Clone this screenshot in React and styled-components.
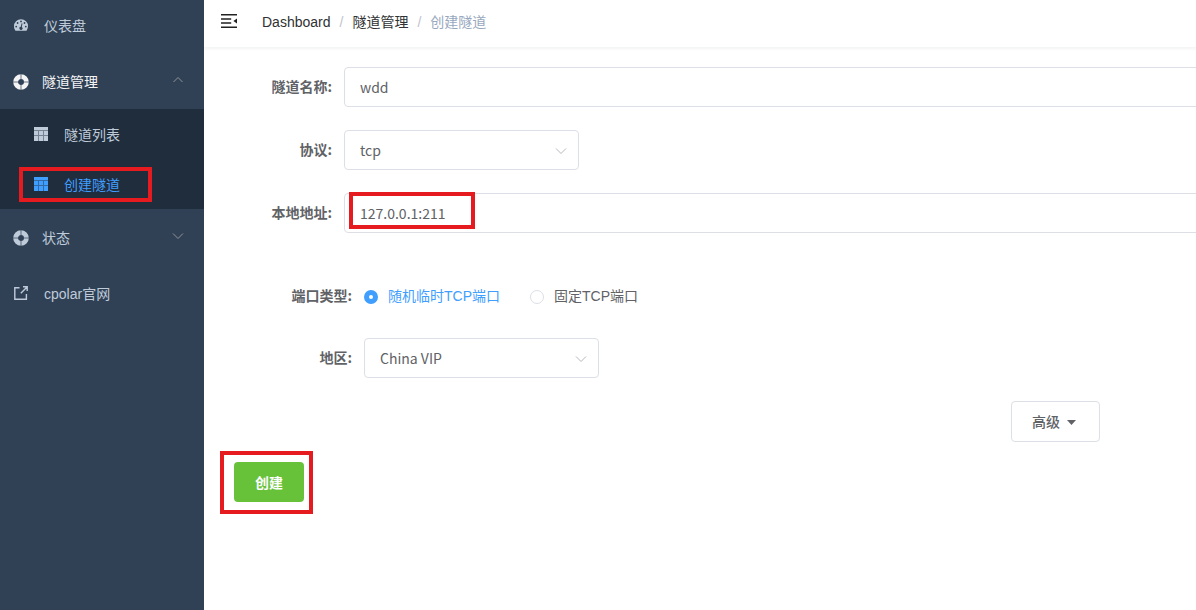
import React, { useState } from "react";
import styled, { createGlobalStyle, css } from "styled-components";

const uiFont = `"Liberation Sans", "Noto Sans CJK SC", sans-serif`;
const fieldFont = `"Noto Sans CJK SC", sans-serif`;

const GlobalStyle = createGlobalStyle`
    * {
        box-sizing: border-box;
    }
    body {
        margin: 0;
        overflow: hidden;
        background: #fff;
        color: #606266;
        font: 14px ${uiFont};
    }
`;

const Layout = styled.div`
    display: flex;
    min-height: 100vh;
`;

const Sidebar = styled.nav`
    width: 204px;
    flex-shrink: 0;
    background: #304156;
`;

const Menu = styled.div`
    display: flex;
    flex-direction: column;
    margin-top: -3px;
`;

const itemBase = css`
    display: flex;
    align-items: center;
    width: 100%;
    height: 56px;
    border: 0;
    background: none;
    color: #bfcbd9;
    font: inherit;
    text-decoration: none;
    cursor: pointer;
`;

const MenuLink = styled.a`
    ${itemBase}
    gap: 16px;
    padding: 0 14px;
`;

const MenuGroup = styled.button`
    ${itemBase}
    gap: 13px;
    padding: 0 20px 0 13px;
    ${props => props.$open && `
        color: #f4f4f5;
    `}
`;

const SubMenu = styled.div`
    background: #1f2d3d;
`;

const SubLink = styled(MenuLink)`
    position: relative;
    height: 50px;
    padding-left: 34px;
    ${props => props.$active && `
        color: #409eff;
    `}
`;

const MenuArrow = styled.span`
    display: flex;
    margin-left: auto;
    padding-bottom: 2px;
    color: #909399;
`;

const Main = styled.main`
    flex: 1;
    min-width: 0;
    overflow: hidden;
`;

const Navbar = styled.header`
    display: flex;
    align-items: center;
    height: 47px;
    padding: 0 16px 5px;
    box-shadow: 0 1px 4px rgba(0, 21, 41, 0.08);
`;

const Hamburger = styled.button`
    display: flex;
    padding: 0;
    margin-right: 24px;
    border: 0;
    background: none;
    color: #222;
    cursor: pointer;
`;

const Breadcrumb = styled.div`
    display: flex;
    align-items: baseline;
    gap: 9px;
`;

const Crumb = styled.a`
    color: #303133;
    text-decoration: none;
    ${props => props.$current && `
        color: #97a8be;
    `}
`;

const Separator = styled.span`
    color: #c0c4cc;
`;

const Form = styled.form`
    display: flex;
    flex-direction: column;
    gap: 23px;
    padding: 20px;
`;

const FormItem = styled.div`
    display: flex;
    align-items: center;
    height: 40px;
    ${props => props.$wide && `
        margin-right: -40px;
    `}
`;

const Label = styled.label`
    width: 120px;
    padding: 0 12px 2px 0;
    color: #606266;
    font: bold 14px ${fieldFont};
    text-align: right;
`;

const InputWrap = styled.div`
    position: relative;
    flex: 1;
`;

const field = css`
    display: block;
    width: 100%;
    height: 40px;
    padding: 0 15px;
    border: 1px solid #dcdfe6;
    border-radius: 4px;
    background: #fff;
    color: #606266;
    font: 14px ${fieldFont};
    outline: none;
`;

const Input = styled.input`
    ${field}
`;

const SelectWrap = styled.div`
    position: relative;
    width: 235px;
`;

const Select = styled.select`
    ${field}
    appearance: none;
`;

const SelectArrow = styled.span`
    position: absolute;
    top: 15px;
    right: 12px;
    display: flex;
    color: #b4b8c0;
    pointer-events: none;
`;

const Section = styled.div`
    display: flex;
    flex-direction: column;
    gap: 22px;
    padding: 20px 20px 0;
`;

const RadioGroup = styled.div`
    display: flex;
    gap: 30px;
    padding-top: 2px;
`;

const RadioLabel = styled.label`
    display: flex;
    align-items: center;
    gap: 10px;
    cursor: pointer;
    ${props => props.$checked && `
        color: #409eff;
    `}
`;

const RadioText = styled.span`
    padding-bottom: 4px;
`;

const Radio = styled.input`
    appearance: none;
    width: 14px;
    height: 14px;
    margin: 0;
    border: 1px solid #dcdfe6;
    border-radius: 50%;
    background: #fff;
    &:checked {
        border: 5px solid #409eff;
    }
`;

const AdvancedButton = styled.button`
    display: flex;
    align-items: center;
    align-self: flex-end;
    gap: 7px;
    height: 41px;
    margin-right: 76px;
    padding: 0 23px 2px 20px;
    border: 1px solid #dcdfe6;
    border-radius: 4px;
    background: #fff;
    color: #606266;
    font: 500 14px ${fieldFont};
    cursor: pointer;
`;

const Actions = styled.div`
    display: flex;
    padding: 0 10px;
    margin-top: -3px;
`;

const SubmitWrap = styled.div`
    position: relative;
`;

const SubmitButton = styled.button`
    width: 70px;
    height: 40px;
    border: 0;
    border-radius: 4px;
    background: #67c23a;
    color: #fff;
    font: bold 14px ${fieldFont};
    cursor: pointer;
`;

// red frame that points the reader at a step
const Highlight = styled.span`
    position: absolute;
    top: ${props => props.$top}px;
    left: ${props => props.$left}px;
    width: ${props => props.$width}px;
    height: ${props => props.$height}px;
    border: 4px solid #e61b1f;
    pointer-events: none;
`;

const DashboardIcon = () => (
    <svg width="14" height="14" viewBox="0 0 14 14">
        <path fill="currentColor" d="M7 1.2a7 7 0 0 0-7 7c0 1.6.5 3 1.3 4.2.2.3.4.4.7.4h10c.3 0 .5-.1.7-.4A7.6 7.6 0 0 0 14 8.2a7 7 0 0 0-7-7z" />
        <g fill="#304156">
            <circle cx="2.2" cy="8.6" r=".9" />
            <circle cx="3.6" cy="5" r=".9" />
            <circle cx="7" cy="3.4" r=".9" />
            <circle cx="10.5" cy="5" r=".9" />
            <circle cx="11.8" cy="8.6" r=".9" />
            <path d="M7.6 5.2l.9.2-.7 3.5a1.6 1.6 0 1 1-1-.2z" />
        </g>
    </svg>
);

const BuoyIcon = () => (
    <svg width="16" height="18" viewBox="0 -2 16 18">
        <circle cx="8" cy="8" r="5.4" fill="none" stroke="currentColor" strokeWidth="4.8" />
        <path d="M8 0v5M8 11v5M0 8h5M11 8h5" stroke="#304156" strokeWidth=".7" />
    </svg>
);

const TableIcon = () => (
    <svg width="14" height="14" viewBox="0 0 14 14" fill="currentColor">
        <path d="M0 0h14v3H0zM0 4h4v4H0zM5 4h4v4H5zM10 4h4v4h-4zM0 9h4v5H0zM5 9h4v5H5zM10 9h4v5h-4z" />
        <path d="M0 3h14v1H0zM0 8h14v1H0zM4 4h1v4H4zM9 4h1v4H9zM4 9h1v5H4zM9 9h1v5H9z" opacity="0.55" />
    </svg>
);

const LinkIcon = () => (
    <svg width="14" height="14" viewBox="0 0 14 14" fill="none" stroke="currentColor" strokeWidth="1.4">
        <path d="M5.5 1.7H.8v11.5h11.6V8M6.8 7.2l6-6M9 .8h4.2V5" />
    </svg>
);

const HamburgerIcon = () => (
    <svg width="18" height="14" viewBox="0 0 18 14" fill="currentColor">
        <path d="M1 0h16v1.6H1zM1 4.2h10.2v1.5H1zM1 8.2h10.2v1.5H1zM1 12.4h16V14H1zM17 4.4v5.2L13.4 7z" />
    </svg>
);

const Chevron = ({ up }) => (
    <svg width="12" height="12" viewBox="0 0 12 12" fill="none" stroke="currentColor">
        <path d={up ? "M1.5 8L6 3.5 10.5 8" : "M1 3.5L6 8.5l5-5"} />
    </svg>
);

const Caret = () => (
    <svg width="9" height="9" viewBox="0 0 9 9" fill="currentColor">
        <path d="M0 4h9L4.5 9z" />
    </svg>
);

const portTypes = [
    { value: "random", text: "随机临时TCP端口" },
    { value: "fixed", text: "固定TCP端口" },
];

function SideMenu() {
    return (
        <Sidebar>
            <Menu>
                <MenuLink href="#dashboard"><DashboardIcon />仪表盘</MenuLink>
                <MenuGroup type="button" $open>
                    <BuoyIcon />隧道管理
                    <MenuArrow><Chevron up /></MenuArrow>
                </MenuGroup>
                <SubMenu>
                    <SubLink href="#list"><TableIcon />隧道列表</SubLink>
                    <SubLink href="#create" $active>
                        <TableIcon />创建隧道
                        <Highlight $top={8} $left={19} $width={133} $height={35} />
                    </SubLink>
                </SubMenu>
                <MenuGroup type="button">
                    <BuoyIcon />状态
                    <MenuArrow><Chevron /></MenuArrow>
                </MenuGroup>
                <MenuLink href="#cpolar"><LinkIcon />cpolar官网</MenuLink>
            </Menu>
        </Sidebar>
    );
}

function TunnelForm() {
    const [name, setName] = useState("wdd");
    const [address, setAddress] = useState("127.0.0.1:211");
    const [portType, setPortType] = useState("random");

    return (
        <Form onSubmit={e => e.preventDefault()}>
            <FormItem $wide>
                <Label htmlFor="name">隧道名称:</Label>
                <InputWrap>
                    <Input id="name" value={name} onChange={e => setName(e.target.value)} />
                </InputWrap>
            </FormItem>
            <FormItem>
                <Label htmlFor="protocol">协议:</Label>
                <SelectWrap>
                    <Select id="protocol" defaultValue="tcp">
                        <option>tcp</option>
                    </Select>
                    <SelectArrow><Chevron /></SelectArrow>
                </SelectWrap>
            </FormItem>
            <FormItem $wide>
                <Label htmlFor="address">本地地址:</Label>
                <InputWrap>
                    <Input id="address" value={address} onChange={e => setAddress(e.target.value)} />
                    <Highlight $top={-1} $left={5} $width={126} $height={37} />
                </InputWrap>
            </FormItem>
            <Section>
                <FormItem role="radiogroup" aria-labelledby="port-type">
                    <Label as="span" id="port-type">端口类型:</Label>
                    <RadioGroup>
                        {portTypes.map(({ value, text }) => (
                            <RadioLabel key={value} $checked={value === portType}>
                                <Radio
                                    type="radio"
                                    name="portType"
                                    checked={value === portType}
                                    onChange={() => setPortType(value)}
                                />
                                <RadioText>{text}</RadioText>
                            </RadioLabel>
                        ))}
                    </RadioGroup>
                </FormItem>
                <FormItem>
                    <Label htmlFor="region">地区:</Label>
                    <SelectWrap>
                        <Select id="region" defaultValue="China VIP">
                            <option>China VIP</option>
                        </Select>
                        <SelectArrow><Chevron /></SelectArrow>
                    </SelectWrap>
                </FormItem>
            </Section>
            <AdvancedButton type="button">高级<Caret /></AdvancedButton>
            <Actions>
                <SubmitWrap>
                    <SubmitButton type="submit">创建</SubmitButton>
                    <Highlight $top={-11} $left={-14} $width={93} $height={63} />
                </SubmitWrap>
            </Actions>
        </Form>
    );
}

export default function App() {
    return (
        <Layout>
            <GlobalStyle />
            <SideMenu />
            <Main>
                <Navbar>
                    <Hamburger type="button" aria-label="menu"><HamburgerIcon /></Hamburger>
                    <Breadcrumb>
                        <Crumb href="#dashboard">Dashboard</Crumb>
                        <Separator>/</Separator>
                        <Crumb href="#tunnels">隧道管理</Crumb>
                        <Separator>/</Separator>
                        <Crumb as="span" $current>创建隧道</Crumb>
                    </Breadcrumb>
                </Navbar>
                <TunnelForm />
            </Main>
        </Layout>
    );
}
